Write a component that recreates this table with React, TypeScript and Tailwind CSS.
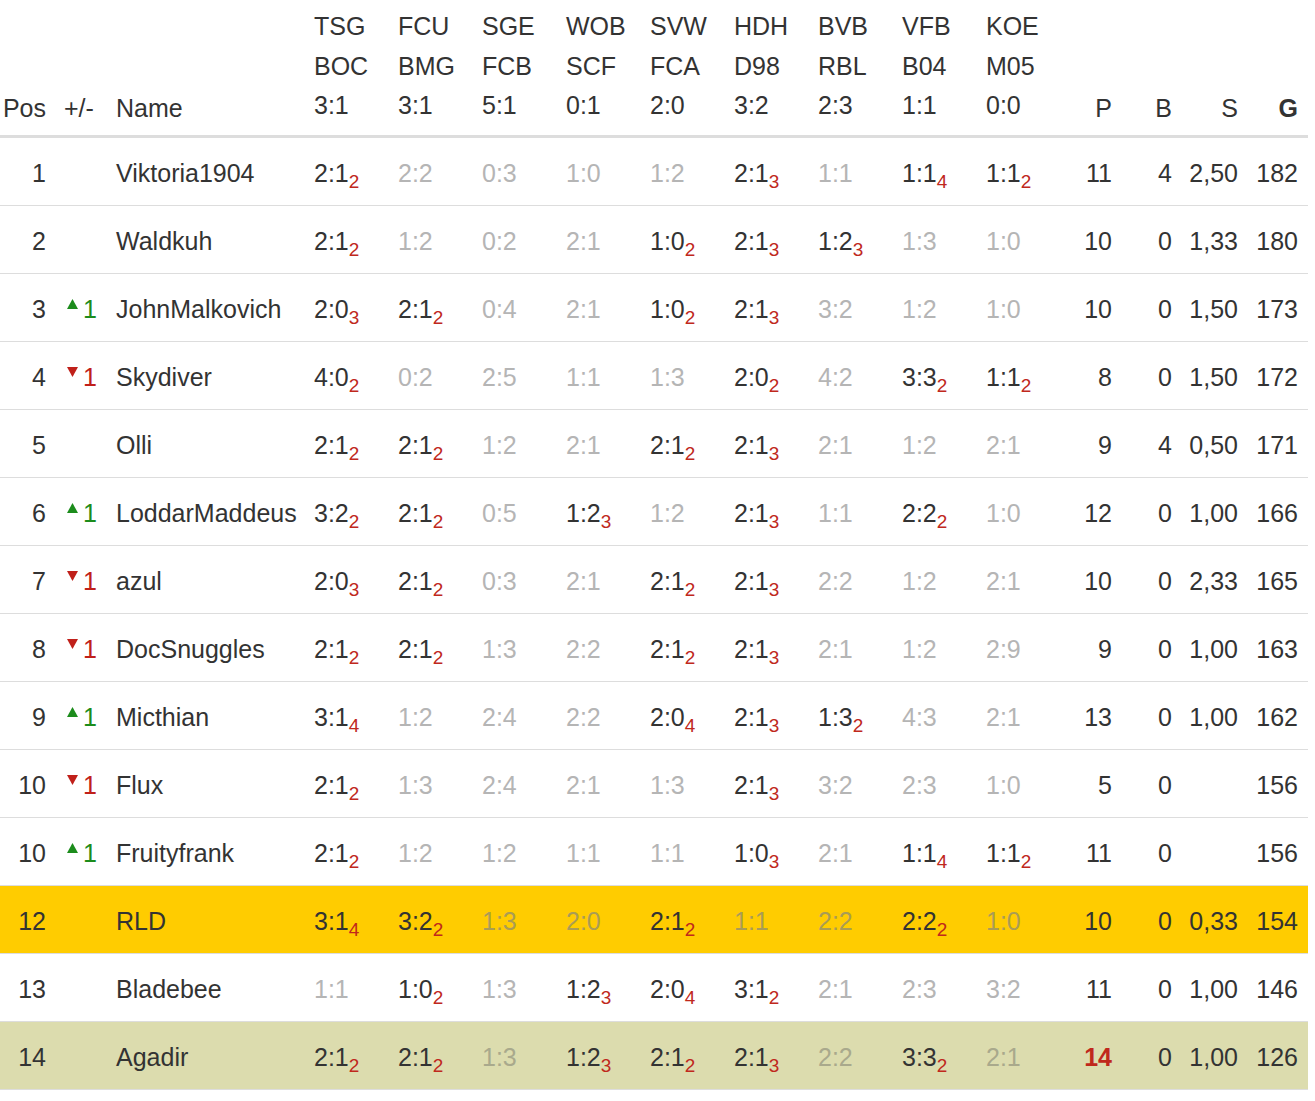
import React from 'react';

// "2:1_2" = tipp with points, "~2:2" = greyed out tipp
type Row = {
  pos: string;
  move?: 'up' | 'down';
  name: string;
  tips: string[];
  p: string;
  b: string;
  s: string;
  g: string;
  bg?: 'own' | 'last';
};

const matches = [
  ['TSG', 'BOC', '3:1'],
  ['FCU', 'BMG', '3:1'],
  ['SGE', 'FCB', '5:1'],
  ['WOB', 'SCF', '0:1'],
  ['SVW', 'FCA', '2:0'],
  ['HDH', 'D98', '3:2'],
  ['BVB', 'RBL', '2:3'],
  ['VFB', 'B04', '1:1'],
  ['KOE', 'M05', '0:0'],
];

const rows: Row[] = [
  { pos: '1', name: 'Viktoria1904', tips: ['2:1_2', '~2:2', '~0:3', '~1:0', '~1:2', '2:1_3', '~1:1', '1:1_4', '1:1_2'], p: '11', b: '4', s: '2,50', g: '182' },
  { pos: '2', name: 'Waldkuh', tips: ['2:1_2', '~1:2', '~0:2', '~2:1', '1:0_2', '2:1_3', '1:2_3', '~1:3', '~1:0'], p: '10', b: '0', s: '1,33', g: '180' },
  { pos: '3', move: 'up', name: 'JohnMalkovich', tips: ['2:0_3', '2:1_2', '~0:4', '~2:1', '1:0_2', '2:1_3', '~3:2', '~1:2', '~1:0'], p: '10', b: '0', s: '1,50', g: '173' },
  { pos: '4', move: 'down', name: 'Skydiver', tips: ['4:0_2', '~0:2', '~2:5', '~1:1', '~1:3', '2:0_2', '~4:2', '3:3_2', '1:1_2'], p: '8', b: '0', s: '1,50', g: '172' },
  { pos: '5', name: 'Olli', tips: ['2:1_2', '2:1_2', '~1:2', '~2:1', '2:1_2', '2:1_3', '~2:1', '~1:2', '~2:1'], p: '9', b: '4', s: '0,50', g: '171' },
  { pos: '6', move: 'up', name: 'LoddarMaddeus', tips: ['3:2_2', '2:1_2', '~0:5', '1:2_3', '~1:2', '2:1_3', '~1:1', '2:2_2', '~1:0'], p: '12', b: '0', s: '1,00', g: '166' },
  { pos: '7', move: 'down', name: 'azul', tips: ['2:0_3', '2:1_2', '~0:3', '~2:1', '2:1_2', '2:1_3', '~2:2', '~1:2', '~2:1'], p: '10', b: '0', s: '2,33', g: '165' },
  { pos: '8', move: 'down', name: 'DocSnuggles', tips: ['2:1_2', '2:1_2', '~1:3', '~2:2', '2:1_2', '2:1_3', '~2:1', '~1:2', '~2:9'], p: '9', b: '0', s: '1,00', g: '163' },
  { pos: '9', move: 'up', name: 'Micthian', tips: ['3:1_4', '~1:2', '~2:4', '~2:2', '2:0_4', '2:1_3', '1:3_2', '~4:3', '~2:1'], p: '13', b: '0', s: '1,00', g: '162' },
  { pos: '10', move: 'down', name: 'Flux', tips: ['2:1_2', '~1:3', '~2:4', '~2:1', '~1:3', '2:1_3', '~3:2', '~2:3', '~1:0'], p: '5', b: '0', s: '', g: '156' },
  { pos: '10', move: 'up', name: 'Fruityfrank', tips: ['2:1_2', '~1:2', '~1:2', '~1:1', '~1:1', '1:0_3', '~2:1', '1:1_4', '1:1_2'], p: '11', b: '0', s: '', g: '156' },
  { pos: '12', name: 'RLD', tips: ['3:1_4', '3:2_2', '~1:3', '~2:0', '2:1_2', '~1:1', '~2:2', '2:2_2', '~1:0'], p: '10', b: '0', s: '0,33', g: '154', bg: 'own' },
  { pos: '13', name: 'Bladebee', tips: ['~1:1', '1:0_2', '~1:3', '1:2_3', '2:0_4', '3:1_2', '~2:1', '~2:3', '~3:2'], p: '11', b: '0', s: '1,00', g: '146' },
  { pos: '14', name: 'Agadir', tips: ['2:1_2', '2:1_2', '~1:3', '1:2_3', '2:1_2', '2:1_3', '~2:2', '3:3_2', '~2:1'], p: '14', b: '0', s: '1,00', g: '126', bg: 'last' },
];

const Tip: React.FC<{ value: string; bg?: Row['bg'] }> = ({ value, bg }) => {
  if (value.startsWith('~')) {
    const grey = bg === 'own' ? 'text-[#a99c55]' : bg === 'last' ? 'text-[#a9a98c]' : 'text-[#b5b5b5]';
    return <span className={grey}>{value.slice(1)}</span>;
  }
  const [score, pts] = value.split('_');
  return (
    <span>
      {score}
      <span className="relative top-[6px] text-[19px] leading-none text-[#c0281c]">{pts}</span>
    </span>
  );
};

const Move: React.FC<{ dir?: Row['move'] }> = ({ dir }) => {
  if (!dir) return null;
  const up = dir === 'up';
  return (
    <span className={up ? 'text-[#1c8c1c]' : 'text-[#c0201a]'}>
      <svg width="11" height="10" viewBox="0 0 11 10" className="inline-block align-baseline relative -top-[9px] ml-[3px] mr-[5px]">
        {up ? <polygon points="5.5,0 11,10 0,10" fill="currentColor" /> : <polygon points="0,0 11,0 5.5,10" fill="currentColor" />}
      </svg>
      1
    </span>
  );
};

const App: React.FC = () => {
  const th = 'border-b-[3px] border-[#dddddd] align-bottom pt-[7px] leading-[39.5px]';
  const td = 'h-[68px] border-b border-[#dddddd] align-middle pt-[6px]';

  return (
    <div className="bg-white min-h-[1101px] text-[#333333] text-[25px]" style={{ fontFamily: '"Liberation Sans", Arial, sans-serif' }}>
      <table className="table-fixed w-[1308px] border-separate border-spacing-0">
        <colgroup>
          <col className="w-[54px]" />
          <col className="w-[56px]" />
          <col className="w-[196px]" />
          {matches.map((m) => (
            <col key={m[0]} className="w-[84px]" />
          ))}
          <col className="w-[58px]" />
          <col className="w-[60px]" />
          <col className="w-[66px]" />
          <col className="w-[62px]" />
        </colgroup>
        <thead>
          <tr>
            <th className={`${th} font-normal pb-[6px] text-right pr-[8px]`}>Pos</th>
            <th className={`${th} font-normal pb-[6px] text-left pl-[10px]`}>+/-</th>
            <th className={`${th} font-normal pb-[6px] text-left pl-[6px]`}>Name</th>
            {matches.map((m) => (
              <th key={m[0]} className={`${th} font-normal pb-[9px] text-left pl-[8px]`}>
                <div>{m[0]}</div>
                <div>{m[1]}</div>
                <div>{m[2]}</div>
              </th>
            ))}
            <th className={`${th} font-normal pb-[6px] text-right pr-[8px]`}>P</th>
            <th className={`${th} font-normal pb-[6px] text-right pr-[8px]`}>B</th>
            <th className={`${th} font-normal pb-[6px] text-right pr-[8px]`}>S</th>
            <th className={`${th} font-bold pb-[6px] text-right pr-[10px]`}>G</th>
          </tr>
        </thead>
        <tbody>
          {rows.map((r, i) => {
            const bg = r.bg === 'own' ? 'bg-[#ffcc00]' : r.bg === 'last' ? 'bg-[#dcdcae]' : 'bg-white';
            return (
              <tr key={i} className={bg}>
                <td className={`${td} text-right pr-[8px]`}>{r.pos}</td>
                <td className={`${td} text-left pl-[10px]`}>
                  <Move dir={r.move} />
                </td>
                <td className={`${td} text-left pl-[6px] whitespace-nowrap`}>{r.name}</td>
                {r.tips.map((t, j) => (
                  <td key={j} className={`${td} text-left pl-[8px] whitespace-nowrap`}>
                    <Tip value={t} bg={r.bg} />
                  </td>
                ))}
                <td className={`${td} text-right pr-[8px] ${r.bg === 'last' ? 'font-bold text-[#c0281c]' : ''}`}>{r.p}</td>
                <td className={`${td} text-right pr-[8px]`}>{r.b}</td>
                <td className={`${td} text-right pr-[8px]`}>{r.s}</td>
                <td className={`${td} text-right pr-[10px]`}>{r.g}</td>
              </tr>
            );
          })}
        </tbody>
      </table>
    </div>
  );
};

export default App;
